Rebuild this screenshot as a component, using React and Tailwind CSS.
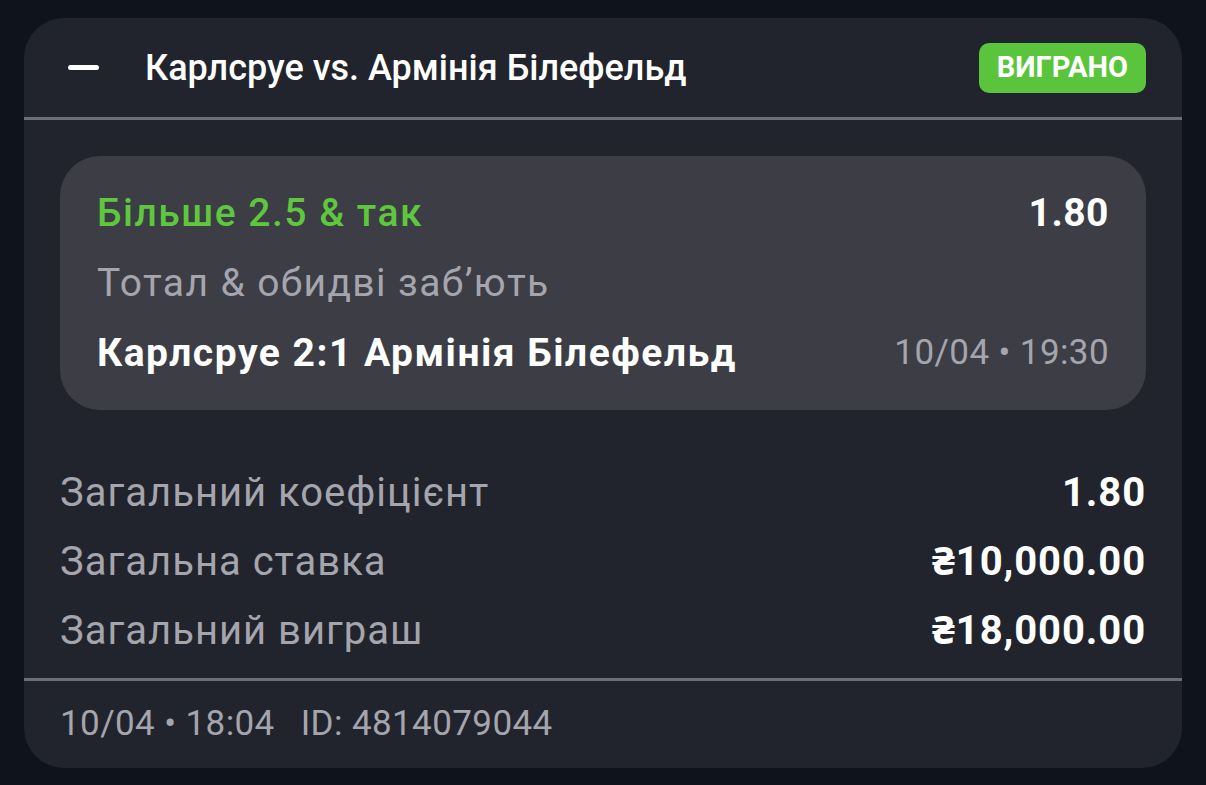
import React from "react";

const rows = [
  { label: "Загальний коефіцієнт", value: "1.80" },
  { label: "Загальна ставка", value: "₴10,000.00" },
  { label: "Загальний виграш", value: "₴18,000.00" },
];

const App = () => {
  return (
    <div
      className="w-[1206px] h-[785px] bg-[#0f131b] pt-[18px] px-[24px]"
      style={{ fontFamily: "Roboto, 'Noto Sans', sans-serif" }}
    >
      <div className="w-[1158px] h-[750px] bg-[#21242c] rounded-[40px] flex flex-col overflow-hidden">
        {/* header */}
        <div className="h-[99px] flex items-center pl-[44px] pr-[36px]">
          <div className="w-[31px] h-[5px] rounded-full bg-white" />
          <span className="ml-[46px] flex-1 text-white text-[36px] font-medium">
            Карлсруе vs. Армінія Білефельд
          </span>
          <span className="h-[50px] px-[18px] flex items-center rounded-[10px] bg-[#5ac43c] text-white text-[29px] font-bold">
            ВИГРАНО
          </span>
        </div>
        <div className="h-[3px] bg-[#6b6e76]" />

        <div className="px-[36px] pt-[36px]">
          {/* selection card */}
          <div className="bg-[#3d3d45] rounded-[40px] px-[37px] py-[22px]">
            <div className="h-[70px] flex items-center justify-between">
              <span className="text-[#5ec73d] text-[39px] font-medium tracking-[1.5px]">
                Більше 2.5 &amp; так
              </span>
              <span className="text-white text-[39px] font-bold tracking-[0.5px]">
                1.80
              </span>
            </div>
            <div className="h-[70px] flex items-center text-[#a5a5ad] text-[39px] tracking-[1.4px]">
              Тотал &amp; обидві заб’ють
            </div>
            <div className="h-[70px] flex items-center justify-between">
              <span className="text-white text-[39px] font-bold tracking-[1.5px]">
                Карлсруе 2:1 Армінія Білефельд
              </span>
              <span className="text-[#a5a5ad] text-[35px] tracking-[0.4px]">
                10/04 • 19:30
              </span>
            </div>
          </div>

          {/* totals */}
          <div className="mt-[48px]">
            {rows.map((row) => (
              <div
                key={row.label}
                className="h-[69px] flex items-center justify-between"
              >
                <span className="text-[#a5a5ad] text-[40px] tracking-[1px]">
                  {row.label}
                </span>
                <span className="text-white text-[40px] font-bold tracking-[0.9px]">
                  {row.value}
                </span>
              </div>
            ))}
          </div>
        </div>

        <div className="mt-[13px] h-[3px] bg-[#6b6e76]" />
        <div className="flex-1 flex items-center px-[36px] text-[#a5a5ad] text-[35px] tracking-[0.4px]">
          <span>10/04 • 18:04</span>
          <span className="ml-[26px]">ID: 4814079044</span>
        </div>
      </div>
    </div>
  );
};

export default App;
